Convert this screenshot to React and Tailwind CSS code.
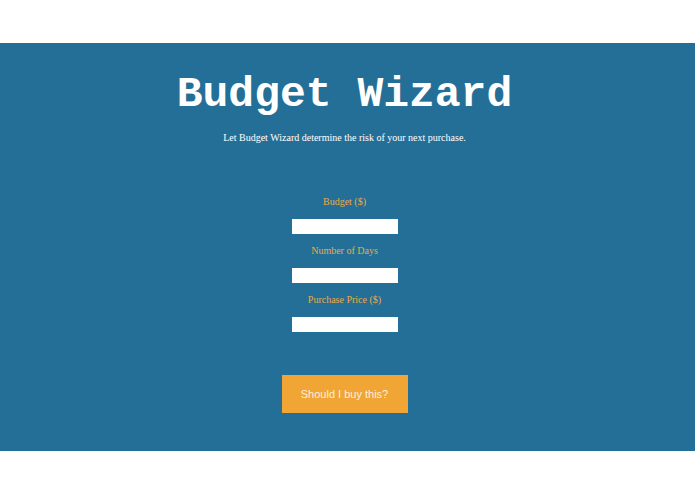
import React from 'react';

const fields = ['Budget ($)', 'Number of Days', 'Purchase Price ($)'];

const App = () => {
  return (
    <div className="w-[695px] h-[494px] bg-white pt-[43px]">
      <div className="h-[408px] bg-[#246f98] flex flex-col items-center pr-[6px]">
        <h1
          className="mt-[26px] text-[43px] leading-[52px] font-bold text-white"
          style={{ fontFamily: '"Liberation Mono", "Courier New", monospace' }}
        >
          Budget Wizard
        </h1>
        <p
          className="mt-[10px] text-[10px] leading-[14px] text-white"
          style={{ fontFamily: '"Liberation Serif", "Times New Roman", serif' }}
        >
          Let Budget Wizard determine the risk of your next purchase.
        </p>
        <form className="mt-[50px] flex flex-col items-center">
          {fields.map((label) => (
            <div key={label} className="flex flex-col items-center">
              <label
                className="h-[14px] text-[10px] leading-[14px] text-[#eca945]"
                style={{ fontFamily: '"Liberation Serif", "Times New Roman", serif' }}
              >
                {label}
              </label>
              <input type="text" className="mt-[10px] mb-[10px] w-[106px] h-[15px] bg-white outline-none" />
            </div>
          ))}
          <button
            type="button"
            className="mt-[33px] w-[126px] h-[38px] bg-[#f0a535] text-[11px] text-[#fdf0dc]"
            style={{ fontFamily: '"Liberation Sans", Arial, sans-serif' }}
          >
            Should I buy this?
          </button>
        </form>
      </div>
    </div>
  );
};

export default App;
